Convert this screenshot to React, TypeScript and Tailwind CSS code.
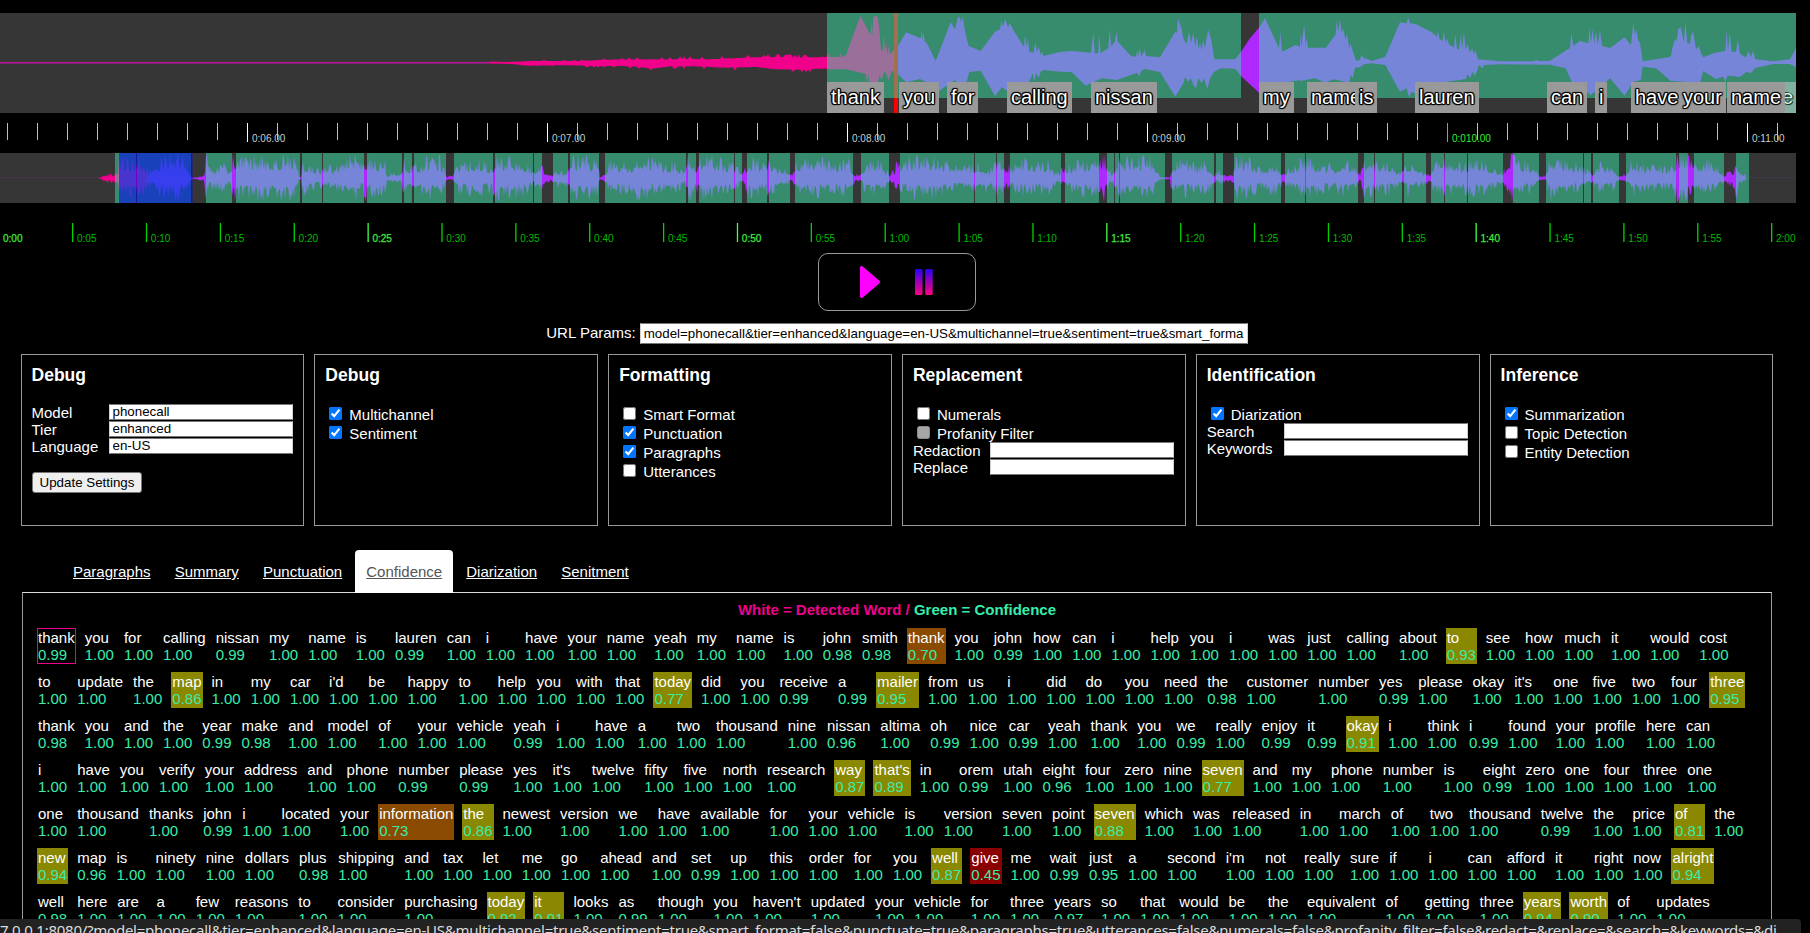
import React from "react";

const FONT = "font-['Liberation_Sans',Arial,sans-serif]";

type Pt = [number, number];

/* ---------- zoomed waveform ---------- */

const introTop: Pt[] = [
  [0, 62], [488, 62], [491, 61.5], [505, 62], [522, 61.5], [535, 61], [560, 61], [580, 61], [600, 60], [625, 59.6],
  [652, 59.4], [672, 59.6], [692, 59], [708, 59.5], [730, 58.5], [756, 57.4], [775, 57.2], [800, 57.8], [826, 57],
];
const introBottom: Pt[] = [
  [0, 63.6], [488, 63.6], [500, 63.8], [515, 64.2], [524, 65.4], [535, 65.5], [560, 65.2], [580, 65.4], [592, 66], [620, 65.8], [635, 66.4],
  [652, 68.6], [670, 66.2], [692, 66], [708, 66.6], [725, 67.4], [756, 66.8], [775, 69], [800, 69.4], [826, 68.4],
];

const speechTopA: Pt[] = [
  [81, 170], [84, 160], [90, 171], [118, 171], [122, 160], [125, 172], [138, 166], [181, 48], [212, 105], [214, 55], [217, 108], [220, 50], [232, 48], [236, 70],
  [243, 150], [248, 152], [252, 103], [255, 158], [258, 125], [263, 165], [266, 135], [270, 163], [282, 150], [294, 138], [318, 97],
  [362, 115], [365, 92], [368, 120], [371, 98], [374, 125], [381, 130], [407, 183], [452, 67], [465, 88], [474, 52], [478, 50],
  [483, 65], [488, 50], [496, 100], [506, 138], [542, 153], [585, 95], [600, 88], [604, 62], [608, 80], [616, 57], [624, 82], [629, 68], [640, 90],
  [668, 135], [672, 140], [675, 105], [680, 142], [684, 115], [688, 155], [700, 158], [706, 128], [711, 155], [716, 140], [722, 166], [726, 152],
  [730, 168], [780, 156], [815, 153], [873, 158], [880, 96], [884, 160], [895, 160], [897, 103], [902, 160], [913, 152],
  [925, 145], [929, 88], [934, 140], [944, 125], [950, 96], [953, 125], [993, 168], [1008, 170], [1012, 150], [1015, 168], [1019, 143], [1024, 170],
  [1034, 150], [1038, 168], [1080, 172], [1125, 97], [1131, 97], [1134, 55], [1145, 88], [1150, 115], [1160, 132], [1164, 110], [1168, 97], [1173, 130],
  [1180, 98], [1186, 140], [1190, 108], [1196, 148], [1200, 128], [1205, 150], [1209, 120], [1215, 145], [1220, 110], [1225, 90], [1234, 120], [1243, 178], [1306, 178],
  [1323, 155], [1350, 115], [1377, 83], [1395, 55], [1437, 145], [1441, 95], [1446, 155], [1487, 135], [1500, 140],
];
const speechBottomA: Pt[] = [
  [81, 208], [138, 208], [198, 222], [200, 250], [205, 225], [210, 260], [232, 260], [238, 225], [245, 240], [252, 215], [258, 220], [266, 240], [275, 213],
  [282, 215], [294, 222], [318, 247], [360, 237], [381, 248], [418, 272], [465, 240], [478, 260], [500, 245], [508, 216], [542, 212], [585, 288],
  [605, 262], [625, 275], [665, 245], [685, 252], [698, 220], [703, 245], [708, 218], [716, 235], [722, 215], [730, 210], [780, 215], [815, 216],
  [857, 257], [905, 235], [950, 240], [1012, 218], [1018, 230], [1024, 212], [1035, 207], [1080, 216], [1126, 290], [1150, 250], [1155, 232],
  [1165, 245], [1172, 235], [1182, 258], [1188, 265], [1195, 235], [1205, 250], [1212, 235], [1222, 268], [1230, 235], [1243, 215], [1262, 205],
  [1306, 206], [1323, 228], [1377, 278], [1400, 270], [1440, 250], [1500, 240],
];
const speechTopB: Pt[] = [
  [1, 100], [4, 140], [8, 105], [13, 75], [17, 138], [20, 115], [24, 143], [78, 143], [107, 103], [110, 62], [115, 95], [120, 58], [126, 100], [130, 85],
  [136, 120], [141, 103], [148, 145], [152, 132], [158, 152], [168, 182], [180, 180], [184, 165], [192, 175], [205, 178], [215, 183], [256, 170], [300, 67],
  [320, 70], [324, 52], [330, 70], [347, 72], [395, 97], [411, 110], [414, 92], [418, 116], [428, 123], [431, 93], [437, 130], [441, 115], [448, 135], [462, 142],
  [466, 103], [471, 146], [477, 148], [483, 102], [486, 148], [492, 97], [497, 150], [503, 132], [510, 158], [516, 145], [522, 162], [527, 152], [534, 178], [600, 184],
  [700, 184], [710, 180], [720, 184], [750, 182], [800, 150], [810, 145], [814, 98], [820, 138], [840, 123], [865, 130], [869, 83], [873, 130], [878, 85],
  [883, 132], [888, 93], [893, 135], [900, 90], [906, 138], [930, 144], [974, 112], [993, 135], [1000, 68], [1004, 105], [1009, 88], [1014, 120], [1020, 128],
  [1028, 184], [1068, 178], [1112, 170], [1118, 140], [1126, 115], [1130, 125], [1134, 88], [1142, 82], [1152, 125], [1156, 65], [1162, 130], [1170, 132],
  [1173, 108], [1179, 94], [1188, 148], [1197, 138], [1203, 160], [1210, 172], [1245, 158], [1276, 153], [1280, 90], [1284, 152], [1289, 98], [1295, 155],
  [1308, 155], [1314, 120], [1319, 160], [1330, 168], [1338, 172], [1345, 153], [1352, 170], [1360, 153], [1366, 178], [1420, 184], [1470, 178], [1488, 145],
];
const speechBottomB: Pt[] = [
  [1, 243], [45, 235], [75, 248], [100, 238], [148, 248], [152, 225], [158, 235], [165, 203], [180, 202], [192, 193], [215, 190], [256, 195], [300, 275], [320, 265],
  [327, 292], [335, 275], [360, 285], [400, 265], [440, 245], [480, 240], [498, 236], [503, 222], [510, 235], [518, 215], [524, 228], [532, 210], [536, 194], [548, 205], [552, 195], [600, 193], [750, 194], [797, 205],
  [815, 245], [860, 275], [872, 285], [890, 270], [930, 235], [974, 287], [1000, 245], [1022, 240], [1028, 200], [1068, 205], [1112, 243],
  [1200, 248], [1210, 213], [1247, 237], [1270, 230], [1276, 245], [1282, 228], [1300, 228], [1318, 232], [1340, 215], [1352, 220], [1366, 204], [1420, 192], [1470, 192], [1488, 202],
];

function rng(seed: number) {
  let s = seed;
  return () => {
    s = (s * 1664525 + 1013904223) % 4294967296;
    return s / 4294967296;
  };
}

/** Adds short random spikes to the noisy lead-in before the first word. */
function roughen(points: Pt[], dir: number, seed: number): Pt[] {
  const rand = rng(seed);
  const out: Pt[] = [];
  points.forEach((p, i) => {
    out.push(p);
    const next = points[i + 1];
    if (!next || p[0] < 520) return;
    for (let x = p[0] + 2; x < next[0]; x += 2) {
      const t = (x - p[0]) / (next[0] - p[0]);
      const base = p[1] + (next[1] - p[1]) * t;
      const room = Math.min(1, (x - 500) / 200);
      const r = rand();
      out.push([x, base + dir * room * (r > 0.8 ? r * 3.2 : r * 0.5)]);
    }
  });
  return out;
}

const place = (pts: Pt[], x0: number): Pt[] => pts.map(([x, y]) => [x0 + x / 3, y / 3]);
const toPath = (top: Pt[], bottom: Pt[], dy: number) =>
  "M" + [...top, ...[...bottom].reverse()].map(([x, y]) => `${x.toFixed(1)} ${(y - dy).toFixed(1)}`).join("L") + "Z";

const zoomPath = toPath(
  [...roughen(introTop, -1, 7), ...place(speechTopA, 800), ...place(speechTopB, 1300)],
  [...roughen(introBottom, 1, 19), ...place(speechBottomA, 800), ...place(speechBottomB, 1300)],
  13,
);

const words: { x: number; w: number; t: string }[] = [
  { x: 827, w: 57, t: "thank" },
  { x: 899, w: 40, t: "you" },
  { x: 947, w: 31, t: "for" },
  { x: 1007, w: 65, t: "calling" },
  { x: 1091, w: 66, t: "nissan" },
  { x: 1259, w: 35, t: "my" },
  { x: 1307, w: 58, t: "name" },
  { x: 1355, w: 22, t: "is" },
  { x: 1415, w: 64, t: "lauren" },
  { x: 1547, w: 40, t: "can" },
  { x: 1595, w: 12, t: "i" },
  { x: 1631, w: 51, t: "have" },
  { x: 1679, w: 47, t: "your" },
  { x: 1727, w: 58, t: "name" },
];

function ZoomWave() {
  return (
    <div className="relative h-[100px] w-[1796px] overflow-hidden bg-[#363636]">
      <svg width="1796" height="100" className="block">
        <defs>
          <clipPath id="played"><rect x="0" y="0" width="896" height="100" /></clipPath>
          <clipPath id="unplayed"><rect x="896" y="0" width="900" height="100" /></clipPath>
        </defs>
        <path d={zoomPath} fill="#f1008b" clipPath="url(#played)" />
        <rect x="0" y="49" width="490" height="1" fill="#c0149c" />
        <rect x="0" y="50" width="490" height="1" fill="#7d2470" />
        <path d={zoomPath} fill="#ae29ff" clipPath="url(#unplayed)" />
        <rect x="894" y="0" width="4" height="100" fill="#ff0000" />
        <rect x="827" y="0" width="414" height="85" fill="#38edac" opacity="0.47" />
        <rect x="1259" y="0" width="537" height="85" fill="#38edac" opacity="0.47" />
      </svg>
      <span className="absolute right-0 bottom-0 h-[31px] bg-[#83b1a0] px-[3px] pt-1 text-[20px] leading-[23px] text-[#d8f4e8] [text-shadow:1px_1px_1px_#1c3c30,-1px_-1px_1px_#1c3c30,1px_0_0_#1c3c30,0_1px_0_#1c3c30]">
        e
      </span>
      {words.map((w, i) => (
        <span
          key={i}
          className="absolute bottom-0 h-[31px] bg-[#999999] pt-1 pl-1 text-[20px] leading-[23px] whitespace-nowrap text-white [text-shadow:-1px_-1px_1px_#000,1px_-1px_1px_#000,-1px_1px_1px_#000,1px_1px_1px_#000,0_1px_0_#000,0_-1px_0_#000,1px_0_0_#000,-1px_0_0_#000]"
          style={{ left: w.x, width: w.w }}
        >
          {w.t}
        </span>
      ))}
    </div>
  );
}

function ZoomRuler() {
  const ticks = Array.from({ length: 60 }, (_, i) => 7 + i * 30);
  const labels = ["0:06.00", "0:07.00", "0:08.00", "0:09.00", "0:010.00", "0:11.00"];
  return (
    <svg width="1796" height="40" className="block text-[10px]">
      {ticks.map((x, i) => {
        const major = (i - 8) % 10 === 0;
        const green = x === 1447;
        return <rect key={x} x={x} y={10} width="1" height={major ? 19 : 17} fill={green ? "#00ff00" : major ? "#ffffff" : "#bfbfbf"} />;
      })}
      {labels.map((t, i) => (
        <text key={t} x={252 + i * 300} y={28.5} fill={i === 4 ? "#33ee33" : "#cccccc"}>
          {t}
        </text>
      ))}
    </svg>
  );
}

/* ---------- full-length overview ---------- */

const speech: Pt[] = [
  [115, 136], [137, 191], [206, 232], [236, 300], [302, 322], [323, 364], [367, 402], [404, 412], [414, 446], [454, 493], [495, 533],
  [534, 542], [553, 568], [570, 599], [605, 686], [688, 696], [699, 734], [735, 742], [747, 767], [769, 790], [795, 853], [861, 889],
  [900, 974], [975, 996], [997, 1004], [1010, 1061], [1065, 1099], [1107, 1114], [1115, 1119], [1120, 1165], [1172, 1214], [1216, 1223],
  [1234, 1281], [1285, 1305], [1306, 1358], [1364, 1374], [1375, 1402], [1404, 1426], [1431, 1444], [1445, 1467], [1468, 1503],
  [1513, 1539], [1546, 1583], [1584, 1591], [1593, 1619], [1626, 1676], [1679, 1688], [1694, 1724], [1736, 1749],
];

const loudness: Pt[] = [
  [99, 0], [101, 1], [108, 3], [118, 4], [119, 20], [122, 16], [130, 12], [136, 14], [142, 12], [148, 6], [153, 8], [160, 12], [170, 16],
  [180, 15], [188, 13], [190, 2], [193, 0], [197, 1], [204, 2], [206, 18], [210, 8], [216, 7], [224, 11], [230, 5], [233, 19], [238, 15], [250, 16],
  [260, 15], [280, 15], [290, 16], [297, 14], [299, 1], [301, 1], [302, 12], [310, 10], [318, 6], [324, 10], [332, 8], [340, 9], [350, 17], [356, 17],
  [362, 10], [366, 16], [372, 12], [380, 14], [385, 12], [387, 1], [392, 4], [401, 3], [404, 14], [411, 8], [414, 9], [420, 10], [428, 15], [440, 14],
  [445, 6], [447, 1], [453, 2], [458, 13], [466, 10], [478, 15], [488, 9], [494, 12], [497, 20], [505, 14], [515, 14], [525, 12], [533, 5], [540, 10],
  [546, 5], [551, 2], [556, 7], [563, 4], [568, 9], [571, 16], [580, 15], [597, 13], [600, 1], [604, 3], [610, 12], [630, 10], [640, 17], [650, 14],
  [665, 10], [675, 12], [685, 5], [688, 22], [695, 10], [706, 17], [720, 14], [735, 10], [743, 3], [748, 14], [760, 12], [770, 12], [788, 5], [792, 2],
  [796, 12], [810, 14], [825, 13], [840, 12], [850, 12], [855, 3], [861, 3], [865, 13], [880, 12], [890, 3], [897, 10], [905, 10], [910, 14], [925, 14],
  [940, 14], [955, 10], [970, 8], [978, 13], [990, 7], [1000, 14], [1006, 10], [1012, 8], [1022, 13], [1035, 12], [1048, 12], [1056, 4], [1061, 6],
  [1070, 9], [1080, 13], [1097, 12], [1103, 18], [1112, 3], [1120, 14], [1130, 14], [1150, 15], [1158, 5], [1161, 0.5], [1170, 1], [1172, 13], [1185, 13],
  [1195, 9], [1208, 12], [1214, 3], [1220, 5], [1226, 2], [1233, 3], [1236, 16], [1250, 14], [1262, 7], [1275, 12], [1283, 5], [1295, 9], [1305, 14],
  [1320, 11], [1335, 9], [1345, 13], [1355, 9], [1360, 2], [1364, 13], [1375, 11], [1390, 12], [1402, 4], [1408, 13], [1420, 6], [1430, 3], [1436, 14],
  [1450, 13], [1462, 11], [1480, 14], [1495, 8], [1503, 4], [1508, 14], [1513, 22], [1520, 13], [1535, 9], [1539, 1.5], [1546, 2], [1550, 17], [1565, 12],
  [1580, 10], [1592, 4], [1600, 11], [1612, 10], [1618, 2], [1626, 3], [1632, 14], [1645, 10], [1660, 9], [1672, 8], [1679, 20], [1690, 15], [1700, 11],
  [1715, 12], [1724, 2], [1728, 5], [1734, 6], [1736, 14], [1739, 5], [1745, 3], [1746, 0],
];

function overviewPath() {
  const rand = rng(42);
  const top: Pt[] = [];
  const bottom: Pt[] = [];
  let k = 0;
  for (let x = 99; x <= 1746; x += 1) {
    while (loudness[k + 1] && loudness[k + 1][0] < x) k += 1;
    const [x0, a0] = loudness[k];
    const [x1, a1] = loudness[k + 1];
    const amp = a0 + ((a1 - a0) * (x - x0)) / (x1 - x0);
    const a = rand();
    const b = rand();
    top.push([x, 25 - Math.min(24, amp * (0.48 + a * a * 1.2))]);
    bottom.push([x, 25.6 + Math.min(23.5, amp * (0.44 + b * b * 1.15))]);
  }
  return toPath(top, bottom, 0);
}
const fullPath = overviewPath();

function Overview() {
  return (
    <svg width="1796" height="50" className="block bg-[#363636]">
      <defs>
        <clipPath id="heard"><rect x="0" y="0" width="147" height="50" /></clipPath>
        <clipPath id="unheard"><rect x="147" y="0" width="1649" height="50" /></clipPath>
      </defs>
      <rect x="0" y="24" width="100" height="1" fill="#4d2f50" />
      <rect x="1746" y="24" width="50" height="1" fill="#42364c" />
      <path d={fullPath} fill="#f1008b" clipPath="url(#heard)" />
      <path d={fullPath} fill="#ae29ff" clipPath="url(#unheard)" />
      {speech.map(([a, b]) => (
        <rect key={a} x={a} y="0" width={b - a} height="50" fill="#38edac" opacity="0.47" />
      ))}
      <rect x="119" y="0" width="73.5" height="50" fill="#0000ff" opacity="0.53" />
    </svg>
  );
}

function OverviewRuler() {
  return (
    <svg width="1796" height="50" className="block text-[10px]">
      {Array.from({ length: 25 }, (_, k) => {
        const x = k === 0 ? -2 : 72 + (k - 1) * 73.87;
        const s = k * 5;
        const bright = k % 5 === 0;
        return (
          <g key={k}>
            <rect x={x} y="20" width="1.3" height="19" fill={bright ? "#44ff44" : "#00d400"} />
            <text x={k === 0 ? 3 : x + 5} y="38.5" fill={bright ? "#3fe83f" : "#00bb00"} stroke={bright ? "#3fe83f" : "none"} strokeWidth="0.25">
              {`${Math.floor(s / 60)}:${String(s % 60).padStart(2, "0")}`}
            </text>
          </g>
        );
      })}
    </svg>
  );
}

/* ---------- controls and settings ---------- */

function Controls() {
  return (
    <div className="mx-auto flex h-[58px] w-[158px] rounded-[10px] border border-[#999999]">
      <svg width="156" height="56">
        <defs>
          <linearGradient id="pause" x1="0" y1="0" x2="0" y2="1">
            <stop offset="0" stopColor="#2a00ff" />
            <stop offset="0.5" stopColor="#9a00b4" />
            <stop offset="1" stopColor="#ff0080" />
          </linearGradient>
        </defs>
        <path d="M42.5 13.5L59.5 28L42.5 42.5Z" fill="#ff00ff" stroke="#ff00ff" strokeWidth="3" strokeLinejoin="round" />
        <rect x="96" y="15" width="7.5" height="26" rx="1.5" fill="url(#pause)" />
        <rect x="106.2" y="15" width="7.5" height="26" rx="1.5" fill="url(#pause)" />
      </svg>
    </div>
  );
}

function Panel({ title, children }: { title: string; children: React.ReactNode }) {
  return (
    <section className="h-[172px] min-w-0 flex-1 border border-[#999999] px-[10px] pt-[10px]">
      <h3 className="mb-[19px] h-5 text-[17.55px] leading-5 font-bold">{title}</h3>
      {children}
    </section>
  );
}

function Field({ label, value = "" }: { label: string; value?: string }) {
  return (
    <label className="flex h-[17px] leading-[17px]">
      <span className="w-[77px] shrink-0">{label}</span>
      <input
        readOnly
        value={value}
        className="h-4 w-[184.5px] border border-x-[#d0d0d0] border-y-[#767676] bg-white pb-px pl-[3px] text-[13.333px] leading-3 text-black"
      />
    </label>
  );
}

function Check({ label, on = false, muted = false }: { label: string; on?: boolean; muted?: boolean }) {
  return (
    <label className="flex h-[19px] items-start">
      {muted ? (
        <span className="mt-[3px] mr-[7px] ml-1 h-[13px] w-[13px] rounded-[2.5px] border border-[#8c8c8c] bg-[#a6a6a6]" />
      ) : (
        <input type="checkbox" readOnly checked={on} className="mt-[3px] mr-[7px] ml-1 h-[13px] w-[13px]" />
      )}
      <span className="pt-[2px] leading-[17px]">{label}</span>
    </label>
  );
}

function Settings() {
  return (
    <div className="mt-[10px] ml-[20.5px] flex w-[1752.9px] gap-[10px]">
      <Panel title="Debug">
        <Field label="Model" value="phonecall" />
        <Field label="Tier" value="enhanced" />
        <Field label="Language" value="en-US" />
        <button className="mt-[17px] ml-[0.5px] block h-[21px] w-[110px] rounded-[3px] border border-[#767676] bg-[#efefef] text-[13.333px] leading-[19px] text-black">
          Update Settings
        </button>
      </Panel>
      <Panel title="Debug">
        <Check label="Multichannel" on />
        <Check label="Sentiment" on />
      </Panel>
      <Panel title="Formatting">
        <Check label="Smart Format" />
        <Check label="Punctuation" on />
        <Check label="Paragraphs" on />
        <Check label="Utterances" />
      </Panel>
      <Panel title="Replacement">
        <Check label="Numerals" />
        <Check label="Profanity Filter" muted />
        <Field label="Redaction" />
        <Field label="Replace" />
      </Panel>
      <Panel title="Identification">
        <Check label="Diarization" on />
        <Field label="Search" />
        <Field label="Keywords" />
      </Panel>
      <Panel title="Inference">
        <Check label="Summarization" on />
        <Check label="Topic Detection" />
        <Check label="Entity Detection" />
      </Panel>
    </div>
  );
}

/* ---------- transcript ---------- */

const tabs = ["Paragraphs", "Summary", "Punctuation", "Confidence", "Diarization", "Senitment"];

/* "word/NN" carries a confidence of 0.NN; a bare word is 1.00. */
const transcript = [
  "thank/99 you for calling nissan/99 my name is lauren/99 can i have your name yeah my name is john/98 smith/98 thank/70 you john/99 how can i help you i was just calling about to/93 see how much it would cost",
  "to update the map/86 in my car i'd be happy to help you with that today/77 did you receive/99 a/99 mailer/95 from us i did do you need the/98 customer number yes/99 please okay it's one five two four three/95",
  "thank/98 you and the year/99 make/98 and model of your vehicle yeah/99 i have a two thousand nine nissan/96 altima oh/99 nice car/99 yeah thank you we/99 really enjoy/99 it/99 okay/91 i think i/99 found your profile here can",
  "i have you verify your address and phone number/99 please/99 yes it's twelve fifty five north research way/87 that's/89 in orem/99 utah eight/96 four zero nine seven/77 and my phone number is eight/99 zero one four three one",
  "one thousand thanks john/99 i located your information/73 the/86 newest version we have available for your vehicle is version seven point seven/88 which was released in march of two thousand twelve/99 the price of/81 the",
  "new/94 map/96 is ninety nine dollars plus/98 shipping and tax let me go ahead and set/99 up this order for you well/87 give/45 me wait/99 just/95 a second i'm not really sure if i can afford it right now alright/94",
  "well/98 here are a few reasons to consider purchasing today/92 it/91 looks as/99 though you haven't updated your vehicle for three years/97 so that would be the equivalent of getting three years/94 worth/90 of updates",
];

function tone(score: number, word: string) {
  if (score < 60) return "bg-[#8a0000] border-[#8a0000]";
  if (score < 75) return "bg-[#8a4a00] border-[#8a4a00]";
  if (score <= 95 && word !== "just") return "bg-[#8a8700] border-[#8a8700]";
  return "border-transparent";
}

function Word({ token, current }: { token: string; current: boolean }) {
  const [word, conf] = token.split("/");
  const score = conf ? Number(conf) : 100;
  return (
    <div className={`m-1 shrink-0 border leading-[17px] ${current ? "border-[#ee028c]" : tone(score, word)}`}>
      <div>{word}</div>
      <div className="text-[#38edac]">{conf ? `0.${conf}` : "1.00"}</div>
    </div>
  );
}

function Transcript() {
  return (
    <>
      <nav className="mt-6 ml-[62px] flex h-[42px] gap-[2.1px]">
        {tabs.map((t) => (
          <a
            key={t}
            className={`h-[43px] rounded-t-[4px] px-[11px] pt-[13px] leading-[17px] underline ${
              t === "Confidence" ? "bg-white text-[#555555]" : "text-white"
            }`}
          >
            {t}
          </a>
        ))}
      </nav>
      <div className="ml-[22px] h-[340px] w-[1750px] border border-x-[#999999] border-t-[#dddddd]">
        <p className="mt-2 mb-[6px] text-center leading-[17px] font-bold text-[#ee028c]">
          White = Detected Word / <span className="text-[#38edac]">Green = Confidence</span>
        </p>
        <div className="pl-[10px]">
          {transcript.map((line, r) => (
            <div key={r} className="flex">
              {line.split(" ").map((token, i) => (
                <Word key={i} token={token} current={r === 0 && i === 0} />
              ))}
            </div>
          ))}
        </div>
      </div>
    </>
  );
}

const status =
  "7.0.0.1:8080/?model=phonecall&tier=enhanced&language=en-US&multichannel=true&sentiment=true&smart_format=false&punctuate=true&paragraphs=true&utterances=false&numerals=false&profanity_filter=false&redact=&replace=&search=&keywords=&di";

export default function App() {
  return (
    <div className={`relative h-[933px] w-[1810px] overflow-hidden bg-black pt-[13px] text-[15px] text-white ${FONT}`}>
      <ZoomWave />
      <ZoomRuler />
      <Overview />
      <OverviewRuler />
      <div className="w-[1794px]">
        <Controls />
        <div className="mt-3 flex h-[21px] justify-center gap-1">
          <span className="pt-px leading-[17px]">URL Params:</span>
          <input
            readOnly
            value="model=phonecall&tier=enhanced&language=en-US&multichannel=true&sentiment=true&smart_forma"
            className="h-[21px] w-[608px] border border-x-[#d0d0d0] border-y-[#767676] bg-white px-[3px] text-[13.333px] leading-4 text-black"
          />
        </div>
      </div>
      <Settings />
      <Transcript />
      <div className="absolute bottom-0 left-0 h-[14px] w-[1801px] overflow-hidden rounded-tr-[4px] bg-[#222222] font-['Noto_Sans',sans-serif] text-[15px] leading-[22px] tracking-[-0.25px] whitespace-nowrap text-[#dddddd]">
        {status}
      </div>
    </div>
  );
}
